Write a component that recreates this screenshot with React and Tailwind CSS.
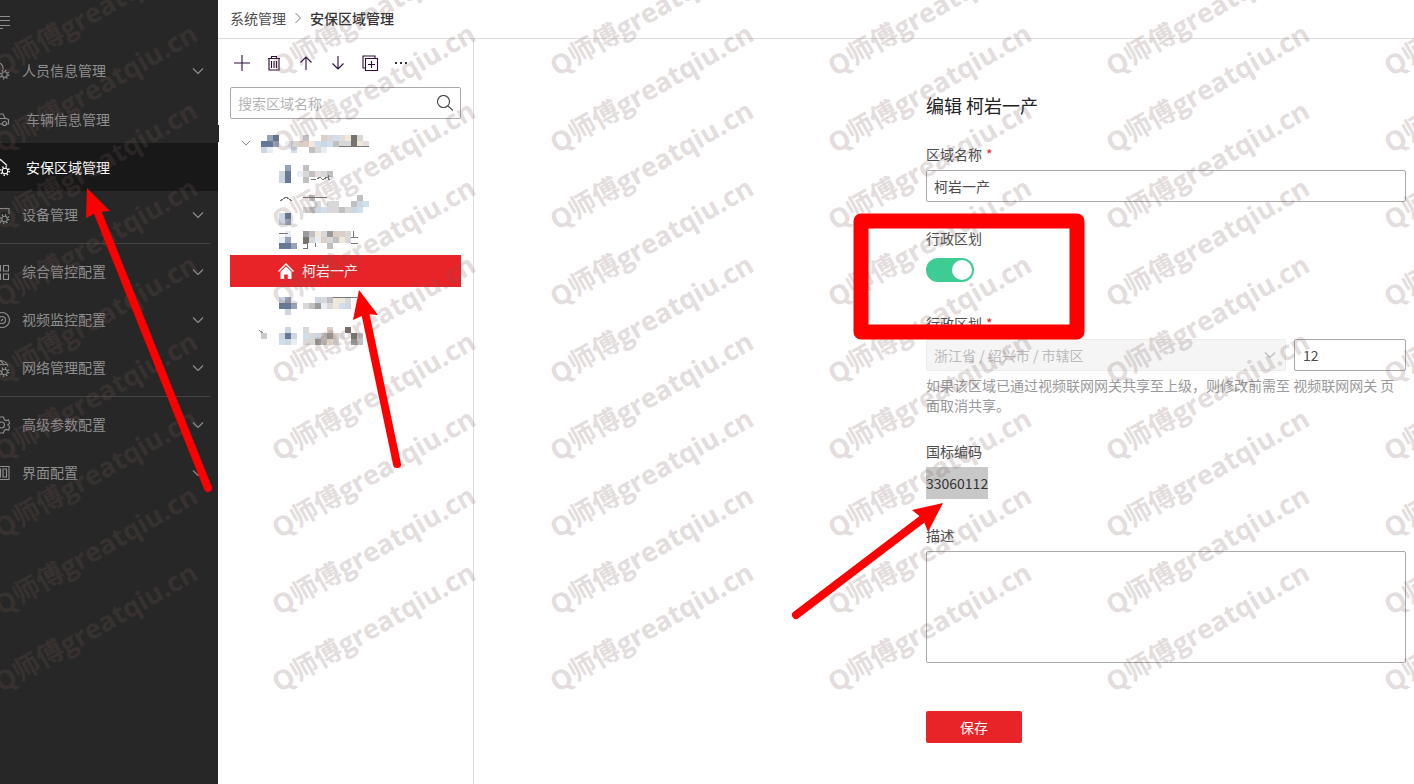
import React from 'react'
import clsx from 'clsx'

const Gear = ({ cx, cy }) => (
  <>
    <circle cx={cx} cy={cy} r="2.8" />
    <circle cx={cx} cy={cy} r="4.2" strokeWidth="1.6" strokeDasharray="1.3 2" />
  </>
)

const icons = {
  people: (
    <>
      <path d="M8 2a5 5 0 0 1 5 5v1.500M3 18v-3c0-2 2-3.500 5-3.500" />
      <Gear cx="14.500" cy="13.500" />
    </>
  ),
  car: (
    <>
      <path d="M4 5h9l2 4 3.500 1.500V15h-2M12 15H6M9 9.500h6M9 9.500V5" />
      <circle cx="14.500" cy="14.500" r="2" />
    </>
  ),
  home: (
    <>
      <path d="M3 9l7.500-6.500L17 8.500M5 8v9h5" />
      <Gear cx="15" cy="14" />
    </>
  ),
  device: (
    <>
      <path d="M2 15V3.500h17V9M5 17.500h6M8 13h2" />
      <Gear cx="14.500" cy="14" />
    </>
  ),
  grid: <path d="M5 3.500h5.500v5.500H5zM13.500 3.500h5v5.500h-5zM5 12h5.500v5.500H5zM13.500 12h5v5.500h-5z" />,
  video: (
    <>
      <circle cx="12" cy="10" r="7.500" />
      <circle cx="12" cy="10" r="3.500" />
      <path d="M11 11l2-2" />
    </>
  ),
  network: (
    <>
      <path d="M10 2.500a8 8 0 0 1 8 6M2.500 6.500H17M10 2.500c2.500 1.500 3.500 3 4 5M3 11h7" />
      <Gear cx="14.500" cy="14" />
    </>
  ),
  settings: (
    <>
      <path d="M9.500 2h4l.7 2.600 1.800 1 2.600-.7 1 3.400-1.900 1.700 1.900 1.700-1 3.400-2.600-.7-1.800 1-.7 2.600h-4l-.7-2.600-1.800-1-2.600.7V4.900l2.600.7 1.800-1z" />
      <circle cx="11.500" cy="10" r="3" />
    </>
  ),
  layout: <path d="M2 3.500h17v13H2zM5 6h5.500v8H5zM13 6h3.500v8H13z" />,
}

const menu = [
  [
    { icon: 'people', label: '人员信息管理', group: true },
    { icon: 'car', label: '车辆信息管理' },
    { icon: 'home', label: '安保区域管理', active: true },
    { icon: 'device', label: '设备管理', group: true },
  ],
  [
    { icon: 'grid', label: '综合管控配置', group: true },
    { icon: 'video', label: '视频监控配置', group: true },
    { icon: 'network', label: '网络管理配置', group: true },
  ],
  [
    { icon: 'settings', label: '高级参数配置', group: true },
    { icon: 'layout', label: '界面配置', group: true },
  ],
]

const Chevron = ({ className }) => (
  <svg viewBox="0 0 12 12" className={className} fill="none" stroke="currentColor" strokeWidth="1.2">
    <path d="M1 3.500l5 5 5-5" />
  </svg>
)

const MenuItem = ({ icon, label, group, active }) => (
  <button
    type="button"
    className={clsx(
      'flex h-12 w-full items-center pr-3.5 text-left',
      group ? 'gap-3' : 'gap-4',
      active ? 'bg-[#181818] text-white' : 'text-[#8f8f8f]'
    )}
  >
    <svg viewBox="0 0 20 20" className="-ml-2.5 h-5 w-5 shrink-0" fill="none" stroke="currentColor" strokeWidth="1.1">
      {icons[icon]}
    </svg>
    <span className={clsx('flex-1', group && 'pb-0.5')}>{label}</span>
    {group && <Chevron className="h-3 w-3" />}
  </button>
)

const Sidebar = () => (
  <aside className="relative w-[218px] shrink-0 bg-[#272727]">
    <button type="button" aria-label="菜单" className="flex h-[47px] items-start pt-3.5 text-[#8f8f8f]">
      <svg viewBox="0 0 10 16" className="h-4 w-2.5" stroke="currentColor" strokeWidth="1">
        <path d="M0 2.500h10M0 6.500h10M0 11.500h10M0 14.500h3" />
      </svg>
    </button>
    <nav>
      {menu.map((section, i) => (
        <div key={i} className={clsx(i > 0 && 'pt-1')}>
          {section.map((item) => (
            <MenuItem key={item.label} {...item} />
          ))}
          {i < menu.length - 1 && <div className="mr-2 h-[5px] border-b border-[#444]" />}
        </div>
      ))}
    </nav>
    <div className="absolute top-[125px] left-full h-[17px] w-px bg-[#272727]" />
  </aside>
)

const tools = [
  { label: '添加', d: 'M8 0v16M0 8h16' },
  { label: '删除', d: 'M2 3.500h12M5.500 3V1.500h5V3M3 4v11h10V4M5.500 6v7M8 6v7M10.500 6v7' },
  { label: '上移', d: 'M8 15V2M2.500 7.500L8 2l5.500 5.500' },
  { label: '下移', d: 'M8 1v13M2.500 8.500L8 14l5.500-5.500' },
  { label: '批量添加', d: 'M3.500 3.500h12v12h-12zM3 13H1V1h12v2M9.500 6v7M6 9.500h7' },
]

const palette = {
  a: '#667896', b: '#97a3b8', c: '#cdd6e1', d: '#e8eef3', e: '#d8d8d8', f: '#c0c0c0',
  g: '#9b9b9b', h: '#dccfc5', i: '#f2e8da', j: '#77736f', k: '#cfdfee', l: '#e6dce0',
}

// every cell is 6x6, a dot leaves it blank
const rows = [
  {
    top: 8,
    open: true,
    cells: ['.ba....f..heklije.', 'aab.dehhikckfeejil', 'cd...k..fed.......'],
    marks: 'M78 19h14M96 19h12',
  },
  { top: 6, cells: ['....b..f..........', '...ca.deflef......', '...ca..f..........'], marks: 'M50 20h5M56 20l3-2 3 3 4-3 3 3M67 16v5' },
  { top: 4, cells: ['........f.......f.', '.........e.ee..fck', '.......efckeefeck.', '...ca.............', '...cb.............'], marks: 'M19 10l6-4 6 4M42 6h24' },
  { top: 8, cells: ['....d..gfieghhe...', '...db..jedhefie...', '...aab.....f......'], marks: 'M18 10h9M42 20h4v5h-4M54 20v4M92 8v6l5 1M90 14h7M90 20l7 1' },
  { selected: '柯岩一产' },
  { top: 10, cells: ['...cb....cefiie...', '...aab.efgdeikc...', '....c.............'], marks: 'M72 10h24' },
  { top: 8, closed: true, cells: ['....c..e...h..j...', '...cac.kecfghd.jf.', '...kcd.eegfie..gf.'] },
]

const TreeRow = ({ top, open, closed, cells, marks, selected }) => {
  if (selected) {
    return (
      <li className="flex h-8 items-center bg-[#e82429] pl-12 text-white">
        <svg viewBox="0 0 16 16" className="mr-2 h-4 w-4" fill="currentColor">
          <path d="M8 0l8 8-1 .9L8 2 1 8.900 0 8z" />
          <path d="M8 3.500l5.500 5.300V16H9.800v-4.500H6.200V16H2.500V8.800z" />
        </svg>
        <span className="pb-0.5">{selected}</span>
      </li>
    )
  }
  return (
    <li className="flex h-8 items-center pl-[11px]">
      <span className="w-5">
        {open && <Chevron className="h-2.5 w-2.5 text-[#888]" />}
      </span>
      <svg viewBox="0 0 120 32" className="h-8 w-[120px] overflow-visible" shapeRendering="crispEdges">
        {cells.map((line, y) =>
          [...line].map(
            (c, x) => c !== '.' && <rect key={`${x}-${y}`} x={x * 6} y={top + y * 6} width="6" height="6" fill={palette[c]} />
          )
        )}
        {marks && <path d={marks} fill="none" stroke="#777" strokeWidth="1" />}
        {closed && (
          <>
            <path d="M-2 11l5 4" stroke="#888" />
            <rect x="0" y="14" width="6" height="6" fill="#c9cccf" />
          </>
        )}
      </svg>
    </li>
  )
}

const AreaTree = () => (
  <section className="w-64 shrink-0 border-r border-[#dedede] px-3">
    <div className="flex h-12 items-center gap-4 pl-1">
      {tools.map(({ label, d }) => (
        <button key={label} type="button" aria-label={label} className="-m-1 p-1">
          <svg viewBox="0 0 16 16" className="h-4 w-4 overflow-visible" fill="none" stroke="#2c0f3a" strokeWidth="1.1">
            <path d={d} />
          </svg>
        </button>
      ))}
      <button type="button" aria-label="更多">
        <svg viewBox="0 0 16 16" className="h-4 w-4" fill="#333">
          <path d="M1 7h2v2H1zM6 7h2v2H6zM11 7h2v2h-2z" />
        </svg>
      </button>
    </div>
    <label className="flex h-8 items-center rounded-xs border border-[#a9a9a9] px-[7px]">
      <input
        type="text"
        aria-label="搜索区域名称"
        placeholder="搜索区域名称"
        className="min-w-0 flex-1 outline-none placeholder:text-[#b3b3b3]"
      />
      <svg viewBox="0 0 16 16" className="h-4 w-4" fill="none" stroke="#444" strokeWidth="1.1">
        <circle cx="6.500" cy="6.500" r="6" />
        <path d="M11 11l5 4.500" />
      </svg>
    </label>
    <ul className="pt-2">
      {rows.map((row, i) => (
        <TreeRow key={i} {...row} />
      ))}
    </ul>
  </section>
)

const Label = ({ htmlFor, required, children }) => (
  <label htmlFor={htmlFor} className="mb-1.5 block leading-5 text-[#4d4d4d]">
    {children}
    {required && <span className="ml-1 text-[#e82429]">*</span>}
  </label>
)

const EditForm = () => (
  <form className="flex w-[480px] flex-col gap-[26px] pt-[52px] text-[#4d4d4d]">
    <h1 className="-mb-px text-lg leading-7 text-[#222]">编辑 柯岩一产</h1>
    <div>
      <Label htmlFor="name" required>区域名称</Label>
      <input id="name" type="text" defaultValue="柯岩一产" className="block h-8 w-full rounded-xs border border-[#a9a9a9] px-[7px]" />
    </div>
    <div>
      <Label htmlFor="division">行政区划</Label>
      <div className="h-[33px] pt-1">
        <input
          id="division"
          type="checkbox"
          role="switch"
          defaultChecked
          className="flex h-6 w-12 appearance-none items-center rounded-full bg-[#3dcc91] px-0.5 before:ml-auto before:h-5 before:w-5 before:rounded-full before:bg-white"
        />
      </div>
    </div>
    <div>
      <Label htmlFor="region" required>行政区划</Label>
      <div className="flex gap-2">
        <div className="relative flex-1">
          <select
            id="region"
            disabled
            className="block h-8 w-full appearance-none rounded-xs border border-[#ececec] bg-[#f5f5f5] px-[7px] text-[#bbb] opacity-100"
          >
            <option>浙江省 / 绍兴市 / 市辖区</option>
          </select>
          <Chevron className="pointer-events-none absolute top-2.5 right-2.5 h-3 w-3 text-[#bbb]" />
        </div>
        <input type="text" aria-label="区划编号" defaultValue="12" className="h-8 w-28 rounded-xs border border-[#a9a9a9] px-2" />
      </div>
      <p className="pt-1 leading-5 text-[#999]">
        如果该区域已通过视频联网网关共享至上级，则修改前需至 视频联网网关 页面取消共享。
      </p>
    </div>
    <div>
      <div className="mb-1.5 leading-5">国标编码</div>
      <div className="flex h-8 w-fit items-center bg-[#c8c8c8] text-[#333]">33060112</div>
    </div>
    <div>
      <Label htmlFor="desc">描述</Label>
      <textarea id="desc" className="block h-28 w-full resize-none rounded-xs border border-[#a9a9a9] p-2" />
    </div>
    <button type="submit" className="mt-[22px] h-8 w-24 rounded-xs bg-[#e82429] text-white">保存</button>
  </form>
)

const Watermark = () => (
  <svg
    aria-hidden="true"
    className="pointer-events-none absolute inset-0 h-full w-full font-['Open_Sans','Noto_Sans_CJK_SC',sans-serif] text-[27px] font-bold"
    fill="#785a58"
    opacity="0.2"
  >
    {[1, 279, 557, 835, 1113, 1391].map((x) =>
      [77, 154, 231, 308, 385, 462, 539, 616, 693].map((y) => (
        <text key={`${x}-${y}`} transform={`translate(${x} ${y}) rotate(-30)`}>Q师傅greatqiu.cn</text>
      ))
    )}
  </svg>
)

// red box and arrows drawn over the page
const Annotations = () => (
  <svg aria-hidden="true" className="pointer-events-none absolute inset-0 h-full w-full" fill="#f00" stroke="#f00">
    <rect x="861" y="221" width="216" height="111" fill="none" strokeWidth="15" strokeLinejoin="round" />
    <g strokeWidth="8" strokeLinecap="round">
      <path d="M96 208L208 488" />
      <path d="M365 312L397 464" />
      <path d="M925 517L796 615" />
    </g>
    <g stroke="none">
      <path d="M87 188L110 211L98 212L86 218Z" />
      <path d="M359 290L378 315L366 314L353 320Z" />
      <path d="M943 503L928 532L923 519L912 510Z" />
    </g>
  </svg>
)

const App = () => {
  return (
    <div className="relative flex min-h-screen overflow-hidden bg-white font-['Noto_Sans_CJK_SC',sans-serif] text-sm text-[#4d4d4d]">
      <Sidebar />
      <div className="flex min-w-0 flex-1 flex-col">
        <header className="flex h-[39px] items-center gap-2 border-b border-[#dedede] px-3 pb-0.5">
          <a href="#system">系统管理</a>
          <svg viewBox="0 0 8 12" className="h-3 w-2" fill="none" stroke="#777">
            <path d="M1.500 1l5 5-5 5" />
          </svg>
          <span className="font-medium text-[#333]">安保区域管理</span>
        </header>
        <div className="flex flex-1">
          <AreaTree />
          <main className="flex flex-1 justify-end pr-2">
            <EditForm />
          </main>
        </div>
      </div>
      <Watermark />
      <Annotations />
    </div>
  )
}

export default App
